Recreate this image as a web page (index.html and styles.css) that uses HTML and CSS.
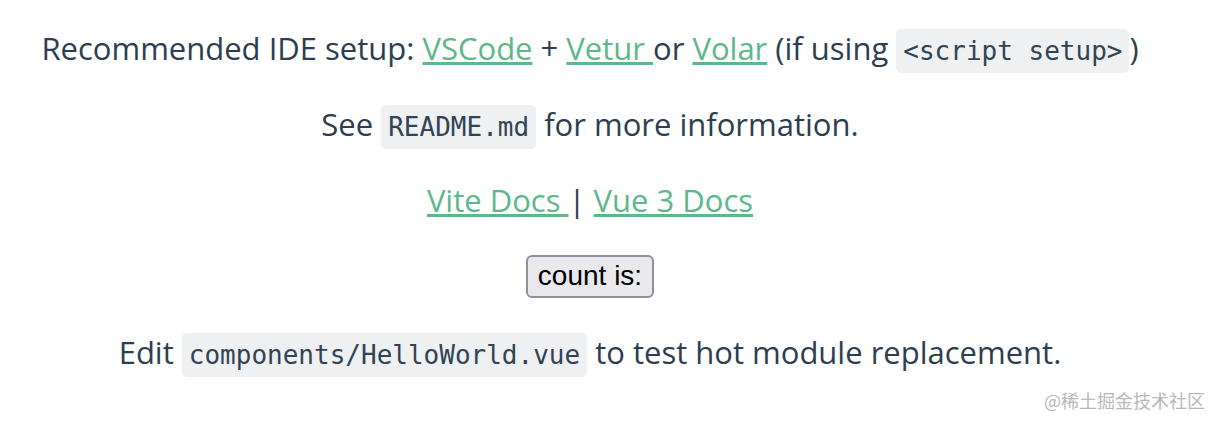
FILE: index.html
```html
<!DOCTYPE html>
<html lang="en">
<head>
    <meta charset="UTF-8">
    <meta name="viewport" content="width=device-width, initial-scale=1.0">
    <title>Vite App</title>
    <link rel="stylesheet" href="styles.css">
</head>
<body>
    <div id="app">
        <p>
            Recommended IDE setup:
            <a href="https://code.visualstudio.com/">VSCode</a>
            +
            <a href="https://github.com/johnsoncodehk/volar">Vetur </a>or
            <a href="https://github.com/johnsoncodehk/volar">Volar</a>
            (if using
            <code>&lt;script setup&gt;</code>)
        </p>

        <p>See <code>README.md</code> for more information.</p>

        <p>
            <a href="https://vitejs.dev/guide/features.html">Vite Docs </a>|
            <a href="https://v3.vuejs.org/">Vue 3 Docs</a>
        </p>

        <div class="counter">
            <button type="button" class="btn-count">count is: </button>
        </div>

        <p>
            Edit
            <code>components/HelloWorld.vue</code> to test hot module replacement.
        </p>
    </div>

    <!-- 水印 -->
    <span class="watermark">@稀土掘金技术社区</span>
</body>
</html>
```

FILE: styles.css
```css
body {
    margin: 0;
    padding: 0;
    background-color: #fff;
}
#app {
    font-family: "Open Sans", Lato, Arial, sans-serif;
    font-size: 31px;
    line-height: 48px;
    color: #2c3e50;
    text-align: center;
    width: 1180px;
    padding-top: 24px;
}
p {
    margin: 0 0 28px;
    height: 48px;
}
a {
    color: #5cb88a;
}
code {
    font-family: "DejaVu Sans Mono", "Liberation Mono", monospace;
    font-size: 26px;
    line-height: 1;
    background-color: #eff0f2;
    color: #304455;
    padding: 7px 7px;
    border-radius: 5px;
}
.counter {
    margin: 0 0 28px;
    height: 48px;
    display: flex;
    justify-content: center;
    align-items: center;
}
.btn-count {
    font-family: "Liberation Sans", Arial, sans-serif;
    font-size: 28px;
    color: #000;
    background-color: #e9e9ed;
    border: 2px solid #8f8f9d;
    border-radius: 6px;
    height: 43px;
    padding: 0 10px;
}
.watermark {
    position: absolute;
    right: 17px;
    bottom: 14px;
    font-family: "Noto Sans CJK SC", sans-serif;
    font-size: 18px;
    line-height: 24px;
    color: #b8b8b8;
}
```
